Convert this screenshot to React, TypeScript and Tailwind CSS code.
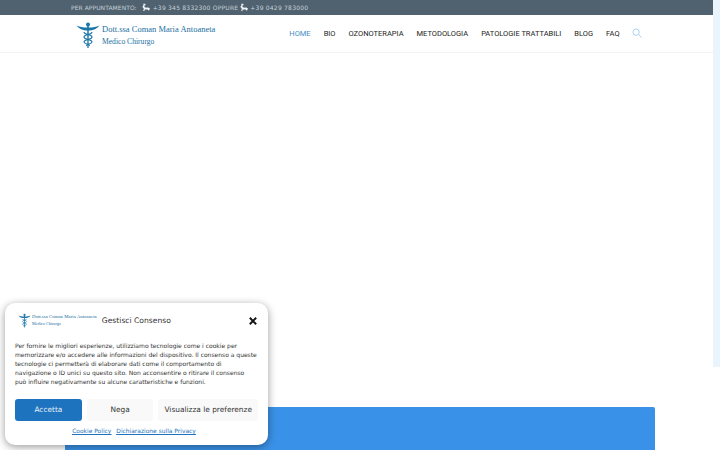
import React from "react";

function Caduceus({ className }: { className: string }) {
  return (
    <svg viewBox="0 0 24 28" className={className} fill="none">
      <path d="M0.5 4.5 C4 6 7 6.5 11 6.5 L13 6.5 C17 6.5 20 6 23.5 4.5 C21 8 17 9.5 13 9.5 L11 9.5 C7 9.5 3 8 0.5 4.5Z" fill="#1b75a8" />
      <circle cx="12" cy="3.5" r="2" fill="#1b75a8" />
      <path d="M11.2 4 L12.8 4 L12.6 27 L11.4 27Z" fill="#1b75a8" />
      <path d="M8 11 C8 14 16 13 16 16 C16 19 8 18 8 21 C8 23 14 23 13.5 25" stroke="#1b75a8" strokeWidth="1.1" />
      <path d="M16 11 C16 14 8 13 8 16 C8 19 16 18 16 21 C16 23 10 23 10.5 25" stroke="#1b75a8" strokeWidth="1.1" />
    </svg>
  );
}

function Phone() {
  return (
    <svg viewBox="0 0 10 10" className="w-[8px] h-[9px] shrink-0" fill="#f1f4f7">
      <path d="M2 0 L4.5 0.5 L4 2.5 L2.8 2.6 L3.4 4.6 L6.5 5.4 L7.4 4.6 L10 6.4 L8.6 9 L7 7.6 L3.4 7.4 L2.8 9.8 L1.4 9 L2.4 6.8 L0.4 4.2 L1.4 3.2Z" />
    </svg>
  );
}

const nav = ["BIO", "OZONOTERAPIA", "METODOLOGIA", "PATOLOGIE TRATTABILI", "BLOG", "FAQ"];

export default function App() {
  return (
    <div className="relative w-[720px] h-[450px] overflow-hidden bg-white flex items-start">
      <div className="w-[713px] h-[450px] flex flex-col shrink-0">
        <div className="h-[15px] shrink-0 bg-[#50626f] flex items-center pl-[71px] text-[6px] tracking-[0.22px] text-[#c5d0d8] font-['DejaVu_Sans',sans-serif] whitespace-nowrap">
          <span className="mr-[5px] tracking-[0.05px]">PER APPUNTAMENTO:</span>
          <Phone />
          <span className="ml-[3px] mr-[2px]">+39 345 8332300 OPPURE</span>
          <Phone />
          <span className="ml-[2px]">+39 0429 783000</span>
        </div>
        <div className="h-[38px] shrink-0 border-b border-[#f3f3f3] flex items-center pl-[76px]">
          <Caduceus className="w-[24px] h-[28px] mt-[2px]" />
          <div className="ml-[2px] mt-[4px] font-['Liberation_Serif',serif] text-[#1b6f9f] leading-none whitespace-nowrap">
            <div className="text-[8.5px]">Dott.ssa Coman Maria Antoaneta</div>
            <div className="text-[7.6px] mt-[4px]">Medico Chirurgo</div>
          </div>
          <nav className="ml-[74px] flex items-center gap-[13px] font-['Roboto',sans-serif] text-[7.5px] text-[#222222] whitespace-nowrap">
            <a className="text-[#3f8fc4]">HOME</a>
            {nav.map((n) => (
              <a key={n}>{n}</a>
            ))}
            <svg viewBox="0 0 12 12" className="w-[10px] h-[10px] -mt-[2px] -ml-[1px]" fill="none" stroke="#a8d4f2" strokeWidth="1.2">
              <circle cx="5" cy="5" r="3.8" />
              <path d="M8 8 L11.5 11.5" />
            </svg>
          </nav>
        </div>
        <div className="mt-[354px] ml-[65px] w-[590px] h-[60px] shrink-0 bg-[#3a92e8] rounded-[2px]" />
      </div>
      <div className="w-[7px] h-[367px] bg-[#e9f4fc]" />

      <div className="absolute left-[5px] top-[303px] w-[263px] h-[142px] bg-white rounded-[10px] shadow-[0_2px_8px_rgba(0,0,0,0.4)] px-[10px] font-['DejaVu_Sans',sans-serif]">
        <div className="flex items-center h-[34px] pl-[3px] pt-[1px]">
          <Caduceus className="w-[13px] h-[15px]" />
          <div className="ml-[1px] font-['Liberation_Serif',serif] text-[#1b6f9f] leading-none whitespace-nowrap">
            <div className="text-[4.87px]">Dott.ssa Coman Maria Antoaneta</div>
            <div className="text-[4.2px] mt-[2px]">Medico Chirurgo</div>
          </div>
          <span className="ml-[5px] text-[7.6px] text-[#333333]">Gestisci Consenso</span>
          <svg viewBox="0 0 10 10" className="ml-auto mr-[1px] w-[8px] h-[8px]" stroke="#111111" strokeWidth="2.4">
            <path d="M1 1 L9 9 M9 1 L1 9" />
          </svg>
        </div>
        <p className="mt-[4px] text-[6px] leading-[9px] text-[#333333] whitespace-nowrap">
          Per fornire le migliori esperienze, utilizziamo tecnologie come i cookie per<br />
          memorizzare e/o accedere alle informazioni del dispositivo. Il consenso a queste<br />
          tecnologie ci permetterà di elaborare dati come il comportamento di<br />
          navigazione o ID unici su questo sito. Non acconsentire o ritirare il consenso<br />
          può influire negativamente su alcune caratteristiche e funzioni.
        </p>
        <div className="mt-[13px] flex gap-[5px] text-[7.4px]">
          <button className="w-[67px] h-[22px] rounded-[3px] bg-[#1e73be] text-[#e8f1f8]">Accetta</button>
          <button className="w-[67px] h-[22px] rounded-[3px] bg-[#f9f9f9] text-[#333333]">Nega</button>
          <button className="w-[100px] h-[22px] rounded-[3px] bg-[#f9f9f9] text-[#333333] whitespace-nowrap">Visualizza le preferenze</button>
        </div>
        <div className="mt-[6px] pr-[5px] flex justify-center gap-[5px] text-[5.95px] text-[#1e73be] underline">
          <a>Cookie Policy</a>
          <a>Dichiarazione sulla Privacy</a>
        </div>
      </div>
    </div>
  );
}
